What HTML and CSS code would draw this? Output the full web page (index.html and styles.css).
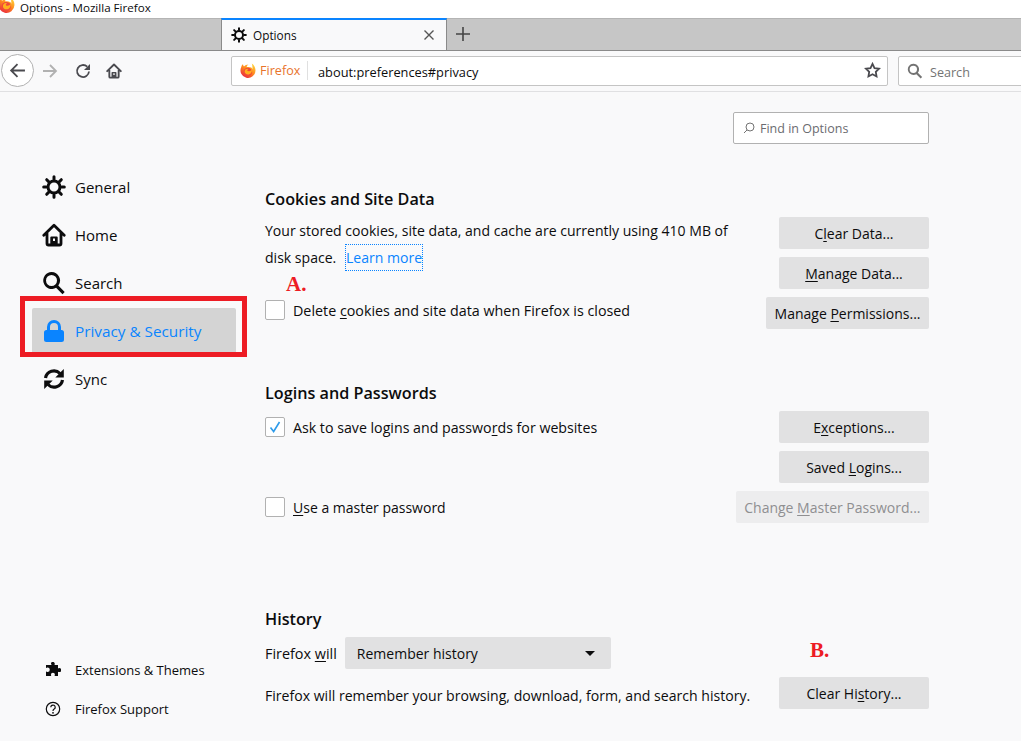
FILE: index.html
```html
<!DOCTYPE html>
<html lang="en">
<head>
<meta charset="utf-8">
<title>Options - Mozilla Firefox</title>
<link rel="stylesheet" href="styles.css">
</head>
<body>
<svg width="0" height="0" class="defs">
  <defs>
    <linearGradient id="fxg" x1="0.85" y1="0.05" x2="0.2" y2="1">
      <stop offset="0" stop-color="#ffd43a"/><stop offset="0.45" stop-color="#ff8a1f"/><stop offset="1" stop-color="#e8213f"/>
    </linearGradient>
    <symbol id="fx" viewBox="0 0 16 16">
      <path d="M11.800 .6c2.300 1.500 3.700 4 3.700 7A7.500 7.500 0 1 1 1.200 4.300C1.400 3.200 2 2 3 1.300c0 1 .4 1.700 1 2.200C5 2.400 6.600 1.600 8.300 1.600c-1 .8-1.600 1.600-1.700 2.500 2.900-.5 5.900.2 6.100 2.400C12.300 4 12.500 2 11.800 .6z" fill="url(#fxg)"/>
      <circle cx="7.800" cy="9" r="4.300" fill="#f0483a"/>
      <path d="M5.400 6.500c1-.9 2.500-1 3.300-.2-.7 0-1.400.4-1.400 1 0 .9 1.300 1.100 2.600.7 1.100-.3 1.500-.9 2-1.400.3 2.700-1.400 5-3.900 5-2 0-3.300-1.400-3.400-3 0-.9.300-1.600.8-2.100z" fill="#ffb01f"/>
    </symbol>
    <symbol id="gear" viewBox="0 0 24 24">
      <circle cx="12" cy="12" r="6" fill="none" stroke="currentColor" stroke-width="3"/>
      <path fill="none" stroke="currentColor" stroke-width="3" stroke-linecap="round" d="M12 1.700v2.600M12 19.700v2.600M1.700 12h2.600M19.700 12h2.600M4.700 4.700l1.900 1.900M17.400 17.400l1.900 1.900M4.700 19.300l1.900-1.900M17.400 6.600l1.900-1.900"/>
    </symbol>
    <symbol id="home" viewBox="0 0 24 24">
      <path fill="none" stroke="currentColor" stroke-width="2.800" stroke-linecap="round" stroke-linejoin="round" d="M1.800 12.300 12 2.300l10.200 10M5 10.500V20.500a1.500 1.500 0 0 0 1.500 1.500h11a1.500 1.500 0 0 0 1.500-1.500V10.500"/>
      <path fill="currentColor" fill-rule="evenodd" d="M9.300 13.500h5.400a1 1 0 0 1 1 1V22H8.300v-7.500a1 1 0 0 1 1-1zM11 15.500v2.500h2v-2.500z"/>
    </symbol>
    <symbol id="search" viewBox="0 0 24 24">
      <path fill="currentColor" fill-rule="evenodd" d="M9.500 1a8.500 8.500 0 0 1 6.800 13.600l6.400 6.400-2.200 2.200-6.400-6.400A8.500 8.500 0 1 1 9.500 1zm0 3a5.500 5.500 0 1 0 0 11 5.500 5.500 0 0 0 0-11z"/>
    </symbol>
  </defs>
</svg>

<header class="titlebar">
  <svg class="title-logo"><use href="#fx"/></svg>
  <span>Options - Mozilla Firefox</span>
</header>

<div class="tabstrip">
  <div class="tab">
    <svg class="tab-gear"><use href="#gear"/></svg>
    <span class="tab-label">Options</span>
    <svg class="tab-close" viewBox="0 0 12 12"><path d="M1.500 1.500l9 9M10.500 1.500l-9 9"/></svg>
  </div>
  <svg class="tab-new" viewBox="0 0 14 14"><path d="M7 0v14M0 7h14"/></svg>
</div>

<nav class="toolbar">
  <button class="back" type="button" aria-label="Back">
    <svg viewBox="0 0 16 16"><path d="M15 8H2M8 2 2 8l6 6"/></svg>
  </button>
  <svg class="tool fwd" viewBox="0 0 16 16"><path d="M1 8h13M8 2l6 6-6 6"/></svg>
  <svg class="tool reload" viewBox="0 0 16 16"><path d="M14 8.500A6 6 0 1 1 12.200 3.700"/><path class="solid" d="M15 1v6H9z"/></svg>
  <svg class="tool homebtn"><use href="#home"/></svg>
  <div class="urlbar">
    <svg class="url-logo"><use href="#fx"/></svg>
    <span class="url-brand">Firefox</span>
    <span class="url-text">about:preferences#privacy</span>
    <svg class="star" viewBox="0 0 16 16"><path d="M8 1.800l1.900 3.900 4.300.6-3.100 3 .7 4.300L8 11.600l-3.800 2 .7-4.300-3.100-3 4.300-.6z"/></svg>
  </div>
  <div class="searchbar">
    <svg class="searchbar-icon"><use href="#search"/></svg>
    <span class="searchbar-text">Search</span>
  </div>
</nav>

<div class="page">
  <aside class="sidebar">
    <ul class="cats">
      <li class="cat"><svg class="cat-icon"><use href="#gear"/></svg>General</li>
      <li class="cat"><svg class="cat-icon"><use href="#home"/></svg>Home</li>
      <li class="cat"><svg class="cat-icon"><use href="#search"/></svg>Search</li>
      <li class="cat cat-active">
        <svg class="cat-icon" viewBox="0 0 24 24"><path d="M12 1a7 7 0 0 0-7 7v3H4.500A2.500 2.500 0 0 0 2 13.500v7A2.500 2.500 0 0 0 4.500 23h15a2.500 2.500 0 0 0 2.500-2.500v-7a2.500 2.500 0 0 0-2.500-2.500H19V8a7 7 0 0 0-7-7zm0 3a4 4 0 0 1 4 4v3H8V8a4 4 0 0 1 4-4z"/></svg>
        Privacy &amp; Security
      </li>
      <li class="cat">
        <svg class="cat-icon" viewBox="0 0 24 24"><path class="sync-arc" d="M3.500 11A8.500 8.500 0 0 1 18 6.500M20.500 13A8.500 8.500 0 0 1 6 17.500"/><path d="M21.800 2v8.500h-8.500zM2.200 22v-8.500h8.500z"/></svg>
        Sync
      </li>
    </ul>
    <ul class="links">
      <li class="link">
        <svg class="link-icon" viewBox="0 0 16 16"><path d="M6 1a2 2 0 0 1 3.800.8c0 .5-.3.9-.3 1.200h3.500v3.500c.3 0 .7-.4 1.200-.4a2 2 0 0 1 0 4c-.5 0-.9-.4-1.200-.4V14H9.500c0-.4.400-.7.400-1.300a2 2 0 0 0-4 0c0 .6.400.9.400 1.300H1V9.500c.5 0 .8.500 1.500.500a2.300 2.300 0 0 0 0-4.600C1.800 5.400 1.500 6 1 6V3h5.500c0-.5-.5-1-.5-2z"/></svg>
        Extensions &amp; Themes
      </li>
      <li class="link">
        <svg class="link-icon help" viewBox="0 0 16 16"><circle cx="8" cy="8" r="6.700"/><path d="M5.800 6.300a2.200 2.200 0 1 1 3.400 1.800c-.8.500-1.200.9-1.200 1.800"/><circle class="solid" cx="8" cy="11.800" r="0.900"/></svg>
        Firefox Support
      </li>
    </ul>
  </aside>

  <main class="content">
    <div class="find">
      <svg viewBox="0 0 12 12"><circle cx="7" cy="5" r="4"/><path d="M4 8 1 11"/></svg>
      <span>Find in Options</span>
    </div>

    <section class="group group-cookies">
      <h2>Cookies and Site Data</h2>
      <div class="grid">
        <p class="para">Your stored cookies, site data, and cache are currently using 410 MB of disk space. <a class="learn">Learn more</a></p>
        <div class="actions">
          <button class="btn" type="button">C<u>l</u>ear Data...</button>
          <button class="btn" type="button"><u>M</u>anage Data...</button>
        </div>
        <label class="check check-raised"><span class="box"></span><span>Delete <u>c</u>ookies and site data when Firefox is closed</span></label>
        <div class="actions"><button class="btn" type="button">Manage <u>P</u>ermissions...</button></div>
      </div>
    </section>

    <section class="group group-logins">
      <h2>Logins and Passwords</h2>
      <div class="grid">
        <label class="check check-wide"><span class="box box-on"><svg viewBox="0 0 20 20"><path d="M5 10.500 8.500 15 15 4.500"/></svg></span><span>Ask to save logins and passwo<u>r</u>ds for websites</span></label>
        <div class="actions"><button class="btn" type="button">E<u>x</u>ceptions...</button></div>
        <span></span>
        <div class="actions"><button class="btn" type="button">Saved <u>L</u>ogins...</button></div>
        <label class="check"><span class="box"></span><span><u>U</u>se a master password</span></label>
        <div class="actions"><button class="btn btn-off" type="button">Change <u>M</u>aster Password...</button></div>
      </div>
    </section>

    <section class="group group-history">
      <h2>History</h2>
      <div class="will">
        <span class="will-label">Firefox <u>w</u>ill</span>
        <div class="select"><span>Remember history</span><i class="caret"></i></div>
      </div>
      <div class="hist-row">
        <span class="hist-text">Firefox will remember your browsing, download, form, and search history.</span>
        <button class="btn" type="button">Clear Hi<u>s</u>tory...</button>
      </div>
    </section>
  </main>
</div>

<div class="redbox"></div>
<span class="mark mark-a">A.</span>
<span class="mark mark-b">B.</span>
</body>
</html>
```
FILE: styles.css
```css
* { box-sizing: border-box; }
html, body { margin: 0; height: 741px; overflow: hidden; }
body {
  position: relative;
  width: 1021px;
  background: #f9f9fa;
  color: #0c0c0d;
  font-family: "Open Sans", "Noto Sans", sans-serif;
  font-size: 14px;
}
.defs { position: absolute; }
u { text-decoration-thickness: 1px; text-underline-offset: 2px; }
ul { list-style: none; margin: 0; padding: 0; }

.titlebar {
  height: 18px;
  background: #fff;
  display: flex;
  align-items: center;
  font-size: 11.6px;
  overflow: hidden;
  padding: 0 0 3px 20px;
  position: relative;
}
.title-logo { position: absolute; left: -2px; top: -3px; width: 17px; height: 17px; }

.tabstrip {
  height: 33px;
  background: #c6c6c6;
  border-top: 1px solid #b4b4b4;
  border-bottom: 1px solid #8a8a8a;
  padding-left: 221px;
  display: flex;
  align-items: flex-start;
}
.tab {
  width: 226px;
  height: 32px;
  margin-top: -1px;
  background: #f9f9fa;
  border-top: 2px solid #0a84ff;
  border-left: 1px solid #8a8a8a;
  border-right: 1px solid #8a8a8a;
  display: flex;
  align-items: center;
  padding: 0 11px 0 9px;
  font-size: 11.8px;
}
.tab-gear { width: 16px; height: 16px; margin-right: 6px; color: #0c0c0d; }
.tab-label { flex: 1; }
.tab-close { width: 12px; height: 12px; fill: none; stroke: #555; stroke-width: 1.4; }
.tab-new { width: 14px; height: 14px; margin: 8px 0 0 9px; fill: none; stroke: #444; stroke-width: 1.6; }

.toolbar {
  height: 41px;
  background: #f9f9fa;
  border-bottom: 1px solid #e0e0e2;
  display: flex;
  align-items: center;
  padding: 0 0 1px 1px;
}
.back {
  width: 33px;
  height: 33px;
  padding: 0;
  border: 1px solid #b1b1b1;
  border-radius: 50%;
  background: #fff;
  display: flex;
  align-items: center;
  justify-content: center;
}
.back svg { width: 17px; height: 17px; fill: none; stroke: #4a4a4f; stroke-width: 1.7; }
.tool { width: 16px; height: 16px; fill: none; stroke: #4a4a4f; stroke-width: 1.8; }
.tool .solid { fill: #4a4a4f; stroke: none; }
.fwd { margin-left: 8px; stroke: #b1b1b1; }
.reload { margin-left: 17px; }
.homebtn { margin-left: 15px; color: #4a4a4f; stroke: none; }
.urlbar {
  width: 657px;
  height: 30px;
  margin-left: 109px;
  background: #fff;
  border: 1px solid #c4c4c4;
  border-radius: 2px;
  display: flex;
  align-items: center;
  padding-left: 8px;
  font-size: 12.8px;
}
.url-logo { width: 16px; height: 16px; margin-right: 4px; }
.url-brand { color: #e8742c; width: 48px; height: 19px; line-height: 19px; border-right: 1px solid #e0e0e0; margin-right: 10px; font-size: 12.6px; }
.url-text { flex: 1; padding-top: 2px; }
.star { width: 17px; height: 17px; margin-right: 6px; fill: none; stroke: #4a4a4f; stroke-width: 1.700; }
.searchbar {
  flex: 1;
  height: 30px;
  margin-left: 10px;
  margin-right: -20px;
  background: #fff;
  border: 1px solid #c4c4c4;
  border-radius: 2px;
  display: flex;
  align-items: center;
  padding-left: 8px;
  font-size: 12.6px;
  color: #737373;
}
.searchbar-text { padding-top: 3px; }
.searchbar-icon { width: 16px; height: 16px; margin-right: 7px; color: #737373; }

.page { height: 649px; display: flex; }
.sidebar {
  width: 265px;
  flex: none;
  display: flex;
  flex-direction: column;
  justify-content: space-between;
  padding: 71px 0 13px 32px;
}
.cat {
  width: 204px;
  height: 48px;
  display: flex;
  align-items: center;
  padding-left: 10px;
  font-size: 15px;
  border-radius: 2px;
}
.cat-icon { width: 24px; height: 24px; margin-right: 9px; flex: none; fill: #0c0c0d; color: #0c0c0d; }
.sync-arc { fill: none; stroke: #0c0c0d; stroke-width: 3.200; }
.cat-active { height: 46px; margin: 1px 0; background: #d4d4d4; color: #0a84ff; font-size: 15.300px; }
.cat-active .cat-icon { fill: #0a84ff; }
.link {
  height: 39px;
  display: flex;
  align-items: center;
  padding-left: 13px;
  font-size: 13px;
}
.link-icon { width: 16px; height: 16px; margin-right: 14px; fill: #0c0c0d; }
.help { fill: none; stroke: #0c0c0d; stroke-width: 1.200; }
.help .solid { fill: #0c0c0d; stroke: none; }

.content { width: 664px; padding-top: 20px; }
.find {
  width: 196px;
  height: 32px;
  margin-left: auto;
  background: #fff;
  border: 1px solid #b1b1b1;
  border-radius: 2px;
  display: flex;
  align-items: center;
  padding-left: 9px;
  font-size: 12.500px;
  color: #6b6b70;
}
.find svg { width: 12px; height: 12px; margin-right: 5px; fill: none; stroke: #737373; stroke-width: 1; }

h2 { margin: 0; height: 24px; line-height: 24px; font-size: 16.200px; font-weight: 600; }
.group-cookies { margin-top: 43px; }
.group-logins { margin-top: 52px; }
.group-history { margin-top: 84px; }
.grid { display: grid; grid-template-columns: 1fr auto; row-gap: 8px; margin-top: 6px; }
.group-cookies .grid { grid-template-rows: 72px 32px; }
.group-logins .grid { grid-template-rows: 32px 32px 32px; }
.para { margin: 0; width: 490px; line-height: 27px; font-size: 14.050px; }
.learn {
  color: #0a84ff;
  margin-left: 6px;
  padding: 3px 0;
  outline: 1px dotted #0a84ff;
  outline-offset: 0;
}
.actions { display: flex; flex-direction: column; align-items: flex-end; gap: 8px; }
.btn {
  height: 32px;
  min-width: 150px;
  padding: 0 8.500px;
  border: 0;
  border-radius: 2px;
  background: #e1e1e2;
  color: #0c0c0d;
  font: inherit;
  font-size: 14px;
  white-space: nowrap;
}
.btn-off { color: #8f8f91; background: #ededee; }
.check { display: flex; align-items: center; font-size: 14px; }
.check-raised { margin-bottom: 6px; font-size: 14.300px; }
.check-wide { font-size: 14.200px; }
.box {
  width: 20px;
  height: 20px;
  margin-right: 8px;
  flex: none;
  background: #fff;
  border: 1px solid #b1b1b1;
  border-radius: 2px;
  display: flex;
}
.box svg { width: 18px; height: 18px; fill: none; stroke: #2f9bea; stroke-width: 1.800; }

.will { display: flex; align-items: center; margin-top: 6px; font-size: 14px; }
.will-label { font-size: 14.400px; }
.select {
  width: 266px;
  height: 32px;
  margin-left: 8px;
  padding: 0 16px 0 12px;
  background: #e1e1e2;
  border-radius: 2px;
  display: flex;
  align-items: center;
  justify-content: space-between;
}
.caret { width: 0; height: 0; border: 5px solid transparent; border-top-color: #0c0c0d; border-bottom-width: 0; }
.hist-row { display: flex; justify-content: space-between; align-items: center; margin-top: 8px; }
.hist-text { position: relative; top: 2px; font-size: 14.080px; }

.redbox {
  position: absolute;
  left: 20px;
  top: 296px;
  width: 227px;
  height: 61px;
  border: 5px solid #ed1c24;
}
.mark {
  position: absolute;
  color: #ed1c24;
  font-family: "Liberation Serif", serif;
  font-weight: 700;
  font-size: 21px;
  line-height: 24px;
}
.mark-a { left: 286px; top: 272px; }
.mark-b { left: 810px; top: 638px; }
```
